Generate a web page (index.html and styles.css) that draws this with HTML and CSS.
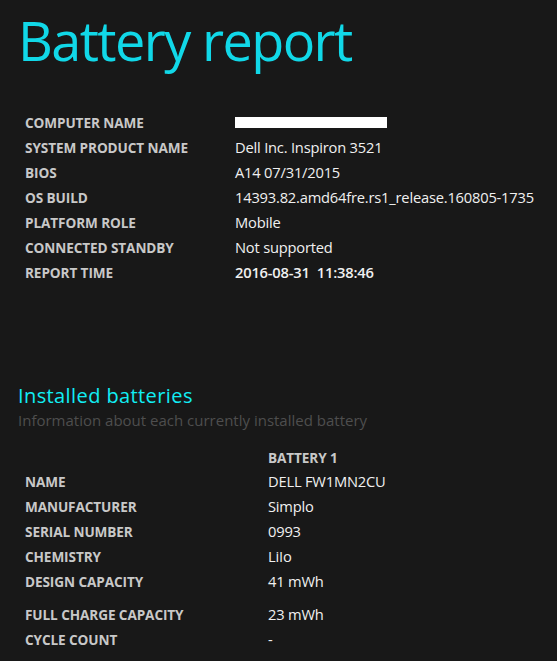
FILE: index.html
```html
<!DOCTYPE html>
<html>
<head>
<meta charset="utf-8">
<link rel="stylesheet" href="styles.css">
</head>
<body>
<main class="page">
  <h1 class="title">Battery report</h1>
  <div class="info">
    <div class="label">Computer name</div><div class="value"><span class="redact"></span></div>
    <div class="label">System product name</div><div class="value">Dell Inc. Inspiron 3521</div>
    <div class="label">BIOS</div><div class="value">A14 07/31/2015</div>
    <div class="label">OS build</div><div class="value">14393.82.amd64fre.rs1_release.160805-1735</div>
    <div class="label">Platform role</div><div class="value">Mobile</div>
    <div class="label">Connected standby</div><div class="value">Not supported</div>
    <div class="label">Report time</div><div class="value strong">2016-08-31&nbsp;&nbsp;11:38:46</div>
  </div>

  <h2 class="section">Installed batteries</h2>
  <div class="explain">Information about each currently installed battery</div>

  <div class="info batt">
    <div class="label"></div><div class="label">Battery 1</div>
    <div class="label">Name</div><div class="value">DELL FW1MN2CU</div>
    <div class="label">Manufacturer</div><div class="value">Simplo</div>
    <div class="label">Serial number</div><div class="value">0993</div>
    <div class="label">Chemistry</div><div class="value">LiIo</div>
    <div class="label">Design capacity</div><div class="value">41 mWh</div>
    <div class="label gap">Full charge capacity</div><div class="value gap">23 mWh</div>
    <div class="label">Cycle count</div><div class="value">-</div>
  </div>
</main>
</body>
</html>
```

FILE: styles.css
```css
html, body {
  margin: 0;
  padding: 0;
  background: #181818;
}
body {
  font-family: "Open Sans", "Noto Sans", sans-serif;
  color: #f0f0f0;
}
.page {
  padding: 0 0 0 18px;
}
.title {
  margin: 0;
  padding-top: 2px;
  font-weight: 400;
  font-size: 54px;
  line-height: 76px;
  letter-spacing: -1.6px;
  color: #11d8e8;
}
.info {
  display: grid;
  grid-template-columns: 210px 1fr;
  margin-top: 32px;
  padding-left: 7px;
  row-gap: 0;
}
.label {
  font-size: 13.6px;
  font-weight: 700;
  text-transform: uppercase;
  color: #c8c8c8;
  line-height: 25px;
  letter-spacing: -0.1px;
}
.value {
  font-size: 14.7px;
  line-height: 25px;
  letter-spacing: -0.2px;
  display: flex;
  align-items: center;
}
.value.strong {
  font-weight: 600;
}
.redact {
  display: block;
  width: 152px;
  height: 11px;
  background: #ffffff;
}
.gap {
  margin-top: 8px;
}
.section {
  margin: 98px 0 0 0;
  font-size: 20px;
  font-weight: 400;
  line-height: 26px;
  letter-spacing: 0.4px;
  color: #11eef4;
}
.explain {
  font-size: 15px;
  line-height: 22px;
  color: #4e4e4e;
  letter-spacing: 0;
}
.batt {
  grid-template-columns: 243px 1fr;
  margin-top: 15px;
}
.batt .label:nth-child(2) {
  line-height: 23px;
}
```
